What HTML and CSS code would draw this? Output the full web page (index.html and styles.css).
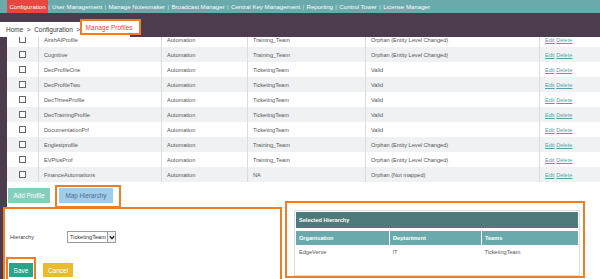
FILE: index.html
```html
<!DOCTYPE html>
<html lang="en">
<head>
    <meta charset="UTF-8">
    <meta name="viewport" content="width=device-width, initial-scale=1.0">
    <title>Manage Profiles</title>
    <link rel="stylesheet" href="styles.css">
</head>
<body>
    <div class="topnav">
        <span class="nav-item active">Configuration</span><span class="sep">|</span>
        <span class="nav-item">User Management</span><span class="sep">|</span>
        <span class="nav-item">Manage Notesmaker</span><span class="sep">|</span>
        <span class="nav-item">Broadcast Manager</span><span class="sep">|</span>
        <span class="nav-item">Central Key Management</span><span class="sep">|</span>
        <span class="nav-item">Reporting</span><span class="sep">|</span>
        <span class="nav-item">Control Tower</span><span class="sep">|</span>
        <span class="nav-item">License Manager</span>
    </div>

    <div class="band">
        <div class="breadcrumb">
            <span>Home</span><span class="arrow">&gt;</span><span>Configuration</span><span class="arrow">&gt;</span><span class="current">Manage Profiles</span>
        </div>
    </div>

    <div class="main">
        <div class="table-wrap">
            <table class="profiles">
                <tr><td class="c-check"><span class="box"></span></td><td class="c-name">AirshAIProfile</td><td class="c-type">Automation</td><td class="c-team">Training_Team</td><td class="c-status">Orphan (Entity Level Changed)</td><td class="c-act"><a>Edit</a> <a>Delete</a></td></tr>
                <tr><td class="c-check"><span class="box"></span></td><td class="c-name">Cognitive</td><td class="c-type">Automation</td><td class="c-team">Training_Team</td><td class="c-status">Orphan (Entity Level Changed)</td><td class="c-act"><a>Edit</a> <a>Delete</a></td></tr>
                <tr><td class="c-check"><span class="box"></span></td><td class="c-name">DecProfileOne</td><td class="c-type">Automation</td><td class="c-team">TicketingTeam</td><td class="c-status">Valid</td><td class="c-act"><a>Edit</a> <a>Delete</a></td></tr>
                <tr><td class="c-check"><span class="box"></span></td><td class="c-name">DecProfileTwo</td><td class="c-type">Automation</td><td class="c-team">TicketingTeam</td><td class="c-status">Valid</td><td class="c-act"><a>Edit</a> <a>Delete</a></td></tr>
                <tr><td class="c-check"><span class="box"></span></td><td class="c-name">DecThreeProfile</td><td class="c-type">Automation</td><td class="c-team">TicketingTeam</td><td class="c-status">Valid</td><td class="c-act"><a>Edit</a> <a>Delete</a></td></tr>
                <tr><td class="c-check"><span class="box"></span></td><td class="c-name">DecTrainingProfile</td><td class="c-type">Automation</td><td class="c-team">TicketingTeam</td><td class="c-status">Valid</td><td class="c-act"><a>Edit</a> <a>Delete</a></td></tr>
                <tr><td class="c-check"><span class="box"></span></td><td class="c-name">DocumentationPrf</td><td class="c-type">Automation</td><td class="c-team">TicketingTeam</td><td class="c-status">Valid</td><td class="c-act"><a>Edit</a> <a>Delete</a></td></tr>
                <tr><td class="c-check"><span class="box"></span></td><td class="c-name">Englestprofile</td><td class="c-type">Automation</td><td class="c-team">Training_Team</td><td class="c-status">Orphan (Entity Level Changed)</td><td class="c-act"><a>Edit</a> <a>Delete</a></td></tr>
                <tr><td class="c-check"><span class="box"></span></td><td class="c-name">EVPlusProf</td><td class="c-type">Automation</td><td class="c-team">Training_Team</td><td class="c-status">Orphan (Entity Level Changed)</td><td class="c-act"><a>Edit</a> <a>Delete</a></td></tr>
                <tr><td class="c-check"><span class="box"></span></td><td class="c-name">FinanceAutomations</td><td class="c-type">Automation</td><td class="c-team">NA</td><td class="c-status">Orphan (Not mapped)</td><td class="c-act"><a>Edit</a> <a>Delete</a></td></tr>
            </table>
        </div>

        <div class="bottom">
            <div class="left-col">
                <div class="actions">
                    <button class="btn add">Add Profile</button>
                    <span class="mark map-mark"><button class="btn map">Map Hierarchy</button></span>
                </div>
                <div class="form-panel">
                    <div class="form-row">
                        <span class="label">Hierarchy</span>
                        <div class="select">
                            <span class="select-text">TicketingTeam</span>
                            <span class="select-arrow">
                                <svg width="6" height="5" viewBox="0 0 6 5"><path d="M0.8 1.2 L3 3.6 L5.2 1.2" fill="none" stroke="#111" stroke-width="1.3"/></svg>
                            </span>
                        </div>
                    </div>
                    <div class="form-buttons">
                        <span class="mark save-mark"><button class="btn save">Save</button></span>
                        <button class="btn cancel">Cancel</button>
                    </div>
                </div>
            </div>

            <div class="right-col">
                <div class="hier-box">
                    <div class="hier-title">Selected Hierarchy</div>
                    <table class="hier">
                        <tr><th class="h-org">Organisation</th><th class="h-dep">Deptartment</th><th>Teams</th></tr>
                        <tr><td>EdgeVerve</td><td>IT</td><td>TicketingTeam</td></tr>
                    </table>
                </div>
            </div>
        </div>
    </div>
</body>
</html>
```

FILE: styles.css
```css
body {
    margin: 0;
    width: 600px;
    height: 279px;
    overflow: hidden;
    background-color: #4d3c4d;
    font-family: "Liberation Sans", Arial, sans-serif;
}

/* top navigation */
.topnav {
    height: 13px;
    background-color: #6aa9ac;
    display: flex;
    align-items: center;
    padding-left: 7px;
    font-size: 6.1px;
    color: #fff;
    white-space: nowrap;
}

.nav-item {
    padding: 0 2.4px;
    line-height: 13px;
}

.nav-item.active {
    background-color: #e8473f;
}

.sep {
    color: #d6e9ea;
}

/* breadcrumb band */
.band {
    height: 24px;
    display: flex;
    align-items: flex-end;
}

.breadcrumb {
    width: 124px;
    height: 15px;
    padding-left: 6px;
    background-color: #fff;
    display: flex;
    align-items: center;
    font-size: 6.5px;
    color: #3a3a3a;
    white-space: nowrap;
}

.arrow {
    margin: 0 3.5px;
}

.current {
    color: #e8473f;
    background-color: #fff;
    border: 2px solid #ef7d22;
    padding: 3px 6px 2px 4px;
    margin-left: -4px;
    margin-top: -5px;
    line-height: 7px;
}

/* main area */
.main {
    margin-left: 7px;
    background-color: #fff;
    height: 242px;
}

.table-wrap {
    height: 145px;
    overflow: hidden;
}

.profiles {
    width: 593px;
    border-collapse: collapse;
    margin-top: -5px;
    font-size: 5.6px;
    color: #555;
    table-layout: fixed;
}

.profiles tr {
    height: 15px;
}

.profiles tr:nth-child(even) {
    background-color: #eff1f2;
}

.profiles td {
    padding: 0 0 0 5px;
    border-left: 1px solid #dcdcdc;
    white-space: nowrap;
}

.profiles td.c-check {
    border-left: none;
    padding: 0;
    text-align: center;
    width: 31px;
}

.c-name { width: 117px; }
.c-type { width: 80px; }
.c-team { width: 112px; }
.c-status { width: 168px; }

.box {
    display: inline-block;
    width: 5px;
    height: 5px;
    border: 1px solid #666;
    background-color: #fff;
    vertical-align: middle;
}

.c-act a {
    color: #5c9ea8;
    text-decoration: underline;
}

/* bottom area */
.bottom {
    display: flex;
    margin-left: -4px;
}

.left-col {
    width: 279px;
}

.actions {
    height: 25px;
    display: flex;
    align-items: flex-start;
    background-color: #fff;
    margin-left: 4px;
    padding-left: 1px;
}

.btn {
    border: none;
    color: #fff;
    font-family: "Liberation Sans", Arial, sans-serif;
    font-size: 6.3px;
    height: 15px;
    padding: 0;
    cursor: pointer;
}

.add {
    width: 42px;
    margin-top: 6px;
    background-color: #86cfbf;
}

.mark {
    display: inline-flex;
    border: 2px solid #ef7d22;
}

.map-mark {
    margin-left: 5px;
    margin-top: 3px;
    padding: 1px 6px 3px 2px;
    position: relative;
    z-index: 1;
}

.map {
    width: 54px;
    background-color: #a2cdea;
    color: #4a6c8a;
}

.form-panel {
    height: 72px;
    border: 2px solid #ef7d22;
    background-color: #fff;
}

.form-row {
    display: flex;
    align-items: center;
    margin-top: 22px;
    padding-left: 5px;
    font-size: 5.6px;
    color: #444;
}

.label {
    width: 57px;
}

.select {
    display: flex;
    width: 47px;
    height: 10px;
    border: 1px solid #9a9a9a;
    align-items: stretch;
}

.select-text {
    flex: 1;
    display: flex;
    align-items: center;
    padding-left: 2px;
    color: #333;
}

.select-arrow {
    width: 7px;
    border-left: 1px solid #9a9a9a;
    background-color: #f0f0f0;
    display: flex;
    align-items: center;
    justify-content: center;
}

.form-buttons {
    display: flex;
    align-items: flex-start;
    margin-top: 14px;
    padding-left: 1px;
}

.save-mark {
    padding: 4px 1px 4px 1px;
}

.save {
    width: 24px;
    height: 14px;
    font-size: 6.5px;
    background-color: #2aa58a;
}

.cancel {
    width: 30px;
    height: 14px;
    margin-left: 7px;
    margin-top: 6px;
    font-size: 6.5px;
    background-color: #ebbb2f;
}

.right-col {
    width: 296px;
    height: 73px;
    margin-left: 3px;
    margin-top: 19px;
    border: 2px solid #ef7d22;
    background-color: #fff;
}

.hier-box {
    margin: 7px 3px 0 7px;
    height: 62px;
    border: 1px solid #dedede;
    padding: 1px;
}

.hier-title {
    height: 16px;
    line-height: 16px;
    padding-left: 3px;
    background-color: #4f7a7c;
    color: #fff;
    font-size: 5.6px;
    font-weight: bold;
}

.hier {
    width: 100%;
    margin-top: 3px;
    border-collapse: collapse;
    font-size: 5.6px;
    table-layout: fixed;
}

.hier th {
    height: 14px;
    background-color: #6aa9ac;
    color: #fff;
    text-align: left;
    padding: 0 0 0 3px;
    border-left: 1px solid #fff;
}

.hier th:first-child {
    border-left: none;
}

.h-org { width: 90px; }
.h-dep { width: 88px; }

.hier td {
    height: 14px;
    padding: 0 0 0 3px;
    color: #555;
}
```
